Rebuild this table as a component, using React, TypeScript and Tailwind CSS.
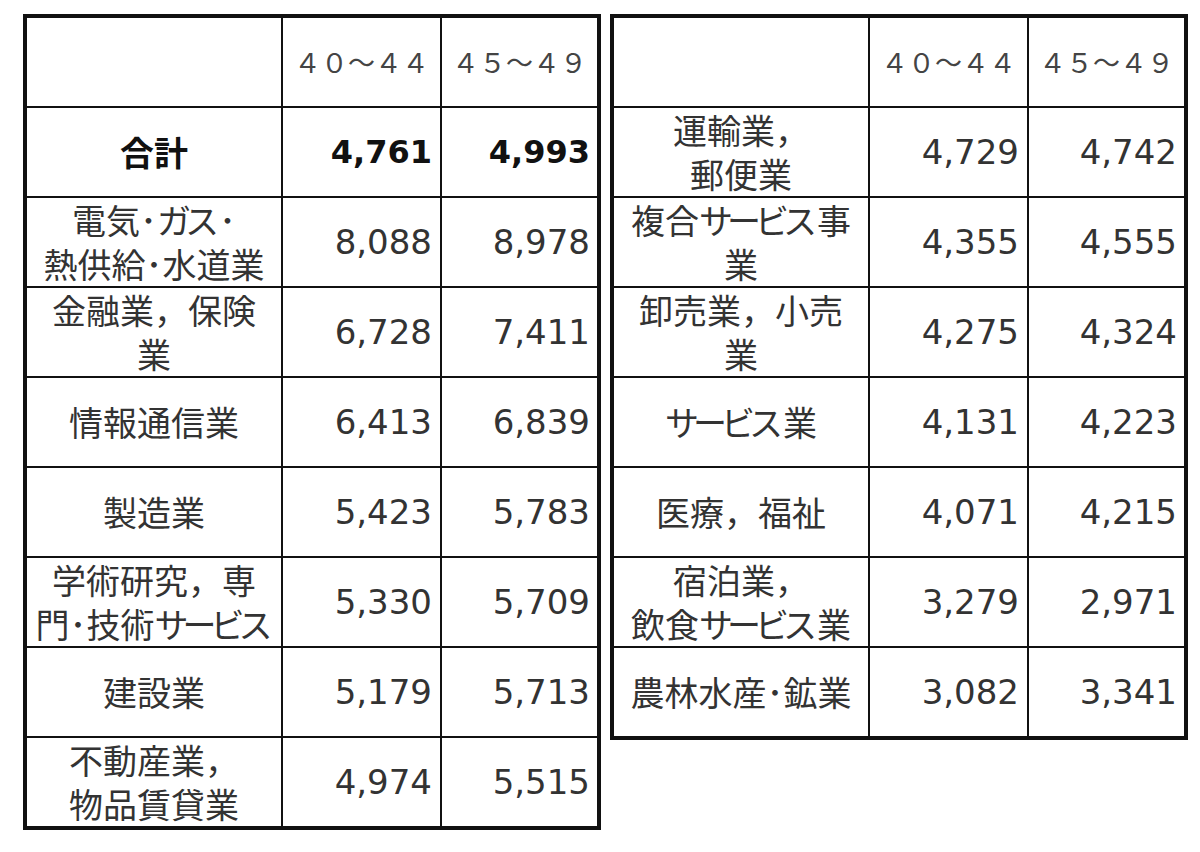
import React from "react";

type Row = { label: string[]; a: string; b: string; bold?: boolean };

const leftRows: Row[] = [
  { label: ["合計"], a: "4,761", b: "4,993", bold: true },
  { label: ["電気･ガス･", "熱供給･水道業"], a: "8,088", b: "8,978" },
  { label: ["金融業，保険", "業"], a: "6,728", b: "7,411" },
  { label: ["情報通信業"], a: "6,413", b: "6,839" },
  { label: ["製造業"], a: "5,423", b: "5,783" },
  { label: ["学術研究，専", "門･技術サービス"], a: "5,330", b: "5,709" },
  { label: ["建設業"], a: "5,179", b: "5,713" },
  { label: ["不動産業，", "物品賃貸業"], a: "4,974", b: "5,515" },
];

const rightRows: Row[] = [
  { label: ["運輸業，", "郵便業"], a: "4,729", b: "4,742" },
  { label: ["複合サービス事", "業"], a: "4,355", b: "4,555" },
  { label: ["卸売業，小売", "業"], a: "4,275", b: "4,324" },
  { label: ["サービス業"], a: "4,131", b: "4,223" },
  { label: ["医療，福祉"], a: "4,071", b: "4,215" },
  { label: ["宿泊業，", "飲食サービス業"], a: "3,279", b: "2,971" },
  { label: ["農林水産･鉱業"], a: "3,082", b: "3,341" },
];

const jp = "font-['Noto_Sans_CJK_JP','Noto_Sans_CJK_SC',sans-serif]";
const num = "font-['DejaVu_Sans','Liberation_Sans',sans-serif]";

function Label({ text }: { text: string }) {
  const parts = text.split(/([ァ-ヶー]+)/).filter((p) => p.length > 0);
  return (
    <span className="block">
      {parts.map((p, i) =>
        /^[ァ-ヶー]+$/.test(p) ? (
          <span key={i} className="tracking-[-6px] mr-[6px]">
            {p}
          </span>
        ) : (
          <span key={i}>{p}</span>
        )
      )}
    </span>
  );
}

function Table({ rows }: { rows: Row[] }) {
  return (
    <div className="border-4 border-[#111] w-[578px] shrink-0">
      <div className="grid grid-cols-[254px_157px_155px] auto-rows-[88px] gap-[2px] bg-[#111]">
        <div className="bg-white" />
        <div
          className={`bg-white flex items-center justify-center text-[27px] text-[#444] font-normal ${jp}`}
        >
          ４０～４４
        </div>
        <div
          className={`bg-white flex items-center justify-center text-[27px] text-[#444] font-normal ${jp}`}
        >
          ４５～４９
        </div>
        {rows.map((r, i) => (
          <React.Fragment key={i}>
            <div
              className={`bg-white flex flex-col items-center justify-center text-[34px] leading-[44px] whitespace-nowrap ${jp} ${
                r.bold ? "font-bold text-[#111] text-[30px]" : "text-[#333]"
              }`}
            >
              {r.label.map((l, j) => (
                <Label key={j} text={l} />
              ))}
            </div>
            <div
              className={`bg-white flex items-center justify-end pr-[8px] ${num} ${
                r.bold ? "font-bold text-[#111] text-[32px]" : "text-[#333] text-[34px]"
              }`}
            >
              {r.a}
            </div>
            <div
              className={`bg-white flex items-center justify-end pr-[7px] ${num} ${
                r.bold ? "font-bold text-[#111] text-[32px]" : "text-[#333] text-[34px]"
              }`}
            >
              {r.b}
            </div>
          </React.Fragment>
        ))}
      </div>
    </div>
  );
}

export default function App() {
  return (
    <div className="w-[1200px] h-[852px] bg-white flex items-start gap-[9px] pt-[14px] pl-[23px]">
      <Table rows={leftRows} />
      <Table rows={rightRows} />
    </div>
  );
}
